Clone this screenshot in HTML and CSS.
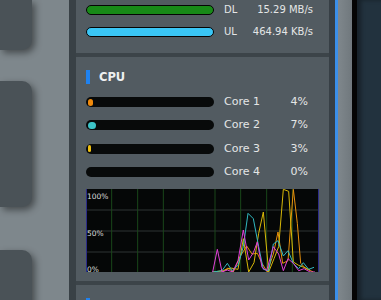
FILE: index.html
```html
<!DOCTYPE html>
<html>
<head>
    <title>Network Map - Status</title>
    <link rel="stylesheet" href="styles.css">
</head>
<body>
    <div class="layout">
        <div class="rail">
            <div class="card card-first"></div>
            <div class="card card-mid"></div>
            <div class="card card-last"></div>
        </div>
        <div class="gutter"></div>

        <div class="panel">
            <div class="section net">
                <div class="row">
                    <div class="bar bar-dl"></div>
                    <span class="label">DL</span>
                    <span class="value">15.29 MB/s</span>
                </div>
                <div class="row">
                    <div class="bar bar-ul"></div>
                    <span class="label">UL</span>
                    <span class="value">464.94 KB/s</span>
                </div>
            </div>

            <div class="section cpu">
                <div class="heading">
                    <span class="mark"></span>
                    <span class="title">CPU</span>
                </div>

                <div class="cores">
                    <div class="row">
                        <div class="track"><div class="fill core1" style="width:4%"></div></div>
                        <span class="label">Core 1</span>
                        <span class="value">4%</span>
                    </div>
                    <div class="row">
                        <div class="track"><div class="fill core2" style="width:7%"></div></div>
                        <span class="label">Core 2</span>
                        <span class="value">7%</span>
                    </div>
                    <div class="row">
                        <div class="track"><div class="fill core3" style="width:3%"></div></div>
                        <span class="label">Core 3</span>
                        <span class="value">3%</span>
                    </div>
                    <div class="row">
                        <div class="track"><div class="fill core4" style="width:0%"></div></div>
                        <span class="label">Core 4</span>
                        <span class="value">0%</span>
                    </div>
                </div>

                <div class="chart">
                    <svg width="233" height="83" viewBox="-342 27 699 249" preserveAspectRatio="none">
                        <g class="grid-h">
                            <line x1="-342" y1="90" x2="357" y2="90"/>
                            <line x1="-342" y1="153" x2="357" y2="153"/>
                            <line x1="-342" y1="216" x2="357" y2="216"/>
                        </g>
                        <g class="grid-v">
                            <line x1="-265" y1="27" x2="-265" y2="276"/>
                            <line x1="-187" y1="27" x2="-187" y2="276"/>
                            <line x1="-110" y1="27" x2="-110" y2="276"/>
                            <line x1="-32" y1="27" x2="-32" y2="276"/>
                            <line x1="45" y1="27" x2="45" y2="276"/>
                            <line x1="122" y1="27" x2="122" y2="276"/>
                            <line x1="200" y1="27" x2="200" y2="276"/>
                            <line x1="277" y1="27" x2="277" y2="276"/>
                        </g>
                        <polyline class="s-orange" points="38,276 66,276 84,264 100,276 120,230 140,198 156,222 172,220 186,250 202,276 220,222 234,156 248,250 264,242 280,28 292,130 302,250 318,266 340,276"/>
                        <polyline class="s-yellow" points="38,276 70,272 92,264 114,268 130,176 146,276 162,248 176,160 190,96 206,276 222,236 236,200 250,28 266,34 280,246 296,256 312,262 330,270"/>
                        <polyline class="s-cyan" points="38,276 66,272 82,250 96,272 114,256 130,200 144,100 160,116 176,200 190,268 206,272 220,192 234,182 250,228 264,212 280,250 296,266 310,248 326,268 342,262"/>
                        <polyline class="s-pink" points="38,276 52,208 66,276 82,270 98,276 114,242 130,150 146,240 160,218 172,186 186,262 200,272 220,200 236,222 250,272 264,236 280,250 296,272 312,266 330,276 345,276"/>
                    </svg>
                    <span class="tick tick-100">100%</span>
                    <span class="tick tick-50">50%</span>
                    <span class="tick tick-0">0%</span>
                </div>
            </div>

            <div class="section next">
                <div class="heading">
                    <span class="mark"></span>
                </div>
            </div>
        </div>

        <div class="edge"></div>
        <div class="accent"></div>
        <div class="frame"></div>
        <div class="shade"></div>
        <div class="desk"></div>
    </div>
</body>
</html>
```

FILE: styles.css
```css
body {
    margin: 0;
    width: 381px;
    height: 300px;
    overflow: hidden;
    font-family: "DejaVu Sans", Verdana, sans-serif;
    color: #e4e6e6;
    background-color: #22323e;
}
.layout {
    display: flex;
    height: 300px;
}

/* left column of cards */
.rail {
    width: 69px;
    flex-shrink: 0;
    display: flex;
    flex-direction: column;
    background-color: #7e878c;
}
.card {
    width: 32px;
    flex-shrink: 0;
    background-color: #4a5257;
    border-radius: 0 10px 10px 0;
    box-shadow: 3px 3px 7px rgba(0,0,0,0.45);
}
.card-first {
    height: 50px;
    border-radius: 0 0 10px 0;
}
.card-mid {
    height: 126px;
    margin-top: 31px;
}
.card-last {
    height: 126px;
    margin-top: 43px;
}
.gutter {
    width: 7px;
    flex-shrink: 0;
    background-color: #394146;
}

/* status panel */
.panel {
    width: 253px;
    flex-shrink: 0;
    display: flex;
    flex-direction: column;
    gap: 4px;
    background-color: #3c4449;
}
.section {
    background-color: #525b61;
    flex-shrink: 0;
}
.row {
    display: grid;
    grid-template-columns: 128px 1fr auto;
    column-gap: 10px;
    align-items: center;
    height: 10px;
}
.net {
    height: 48px;
    padding: 5px 16px 0 10px;
    display: flex;
    flex-direction: column;
    gap: 12px;
}
.net .label,
.net .value {
    font-size: 10px;
    line-height: 10px;
}
.bar {
    height: 8px;
    border: 1px solid #050505;
    border-radius: 5px;
}
.bar-dl {
    background-color: #188a18;
}
.bar-ul {
    background-color: #3ac6f6;
}

.cpu {
    padding: 13px 10px 9px 10px;
}
.heading {
    display: flex;
    align-items: center;
    gap: 9px;
    height: 14px;
}
.mark {
    width: 4px;
    height: 14px;
    background-color: #1f82f0;
}
.title {
    font-size: 11.5px;
    font-weight: bold;
    color: #eef0f0;
}
.cores {
    margin-top: 13px;
    padding-right: 11px;
    display: flex;
    flex-direction: column;
    gap: 13.4px;
}
.cores .label,
.cores .value {
    font-size: 11px;
    line-height: 10px;
}
.track {
    height: 10px;
    box-sizing: border-box;
    padding: 1.5px;
    background-color: #080a0a;
    border-radius: 5px;
}
.fill {
    height: 7px;
    border-radius: 4px;
}
.core1 { background-color: #f08a0c; }
.core2 { background-color: #3cc4c8; }
.core3 { background-color: #f0c010; }
.core4 { background-color: #f050c0; }

.chart {
    position: relative;
    width: 233px;
    height: 83px;
    margin-top: 12px;
    background-color: #050707;
}
.chart svg {
    display: block;
}
.grid-h line {
    stroke: #2f3535;
    stroke-width: 3;
}
.grid-v line {
    stroke: #1a461a;
    stroke-width: 3;
}
.chart polyline {
    fill: none;
    stroke-width: 3;
    stroke-linejoin: round;
}
.s-orange { stroke: #e8900c; }
.s-yellow { stroke: #d8b808; }
.s-cyan { stroke: #30b8c0; }
.s-pink { stroke: #e040d8; }
.chart::before,
.chart::after {
    content: "";
    position: absolute;
    top: 0;
    bottom: 0;
    width: 1px;
    background-color: #2c2c88;
}
.chart::before { left: 0; }
.chart::after { right: 0; }
.tick {
    position: absolute;
    left: 1px;
    font-size: 7.5px;
    line-height: 7px;
    color: #dcdede;
}
.tick-100 { top: 4px; }
.tick-50 { top: 41px; }
.tick-0 { top: 77px; }

.next {
    padding: 13px 10px 0 10px;
    height: 40px;
}

/* right edge */
.edge {
    width: 6px;
    flex-shrink: 0;
    background-color: #373f45;
}
.accent {
    width: 3px;
    flex-shrink: 0;
    background-color: #3b8fe9;
}
.frame {
    width: 14px;
    flex-shrink: 0;
    background: linear-gradient(90deg, #7f878c, #70787d);
}
.shade {
    width: 5px;
    flex-shrink: 0;
    background-color: #040404;
}
.desk {
    flex: 1;
    background-color: #22323e;
    box-shadow: inset 4px 0 4px rgba(0,0,0,0.35);
}
```
